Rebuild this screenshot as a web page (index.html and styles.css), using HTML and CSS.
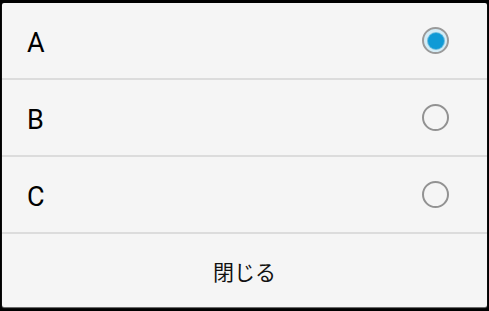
FILE: index.html
```html
<!DOCTYPE html>
<html>
<head>
<meta charset="utf-8">
<link rel="stylesheet" href="styles.css">
</head>
<body>
<div class="dialog">
  <div class="row"><span class="label">A</span><span class="radio checked"><span class="dot"></span></span></div>
  <div class="row"><span class="label">B</span><span class="radio"></span></div>
  <div class="row"><span class="label">C</span><span class="radio"></span></div>
  <div class="button">閉じる</div>
</div>
</body>
</html>
```
FILE: styles.css
```css
html, body {
  margin: 0;
  padding: 0;
  background: #000;
  width: 489px;
  height: 311px;
  overflow: hidden;
}
.dialog {
  margin: 3px 2px 0 2px;
  width: 485px;
  height: 304px;
  background: #f5f5f5;
  border-radius: 2px;
  display: flex;
  flex-direction: column;
  box-shadow: 0 1px 1px #777;
}
.row {
  height: 75px;
  border-bottom: 2px solid #dcdcdc;
  display: flex;
  align-items: center;
  justify-content: space-between;
  padding: 0 38px 0 25px;
  flex: none;
}
.label {
  font-family: Roboto, "Noto Sans", sans-serif;
  font-size: 27px;
  color: #000;
  position: relative;
  top: 2px;
}
.radio {
  width: 23px;
  height: 23px;
  border: 2px solid #929292;
  border-radius: 50%;
  display: flex;
  align-items: center;
  justify-content: center;
  box-sizing: content-box;
}
.radio.checked {
  background: #d3ecf6;
  border-color: #9a9a9a;
}
.dot {
  width: 16px;
  height: 16px;
  border-radius: 50%;
  background: #0f9ad6;
  box-shadow: 0 0 0 1px #6dbcdd;
}
.button {
  flex: 1;
  display: flex;
  align-items: center;
  justify-content: center;
  font-family: "Noto Sans CJK JP", sans-serif;
  font-size: 21px;
  color: #111;
}
```
